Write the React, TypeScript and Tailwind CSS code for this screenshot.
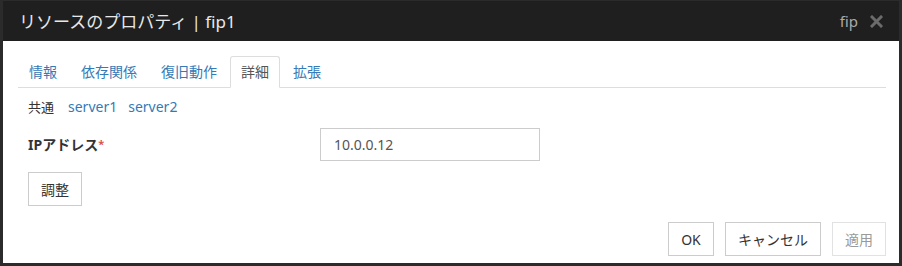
import React from "react";

const TABS = ["情報", "依存関係", "復旧動作", "詳細", "拡張"];
const ACTIVE = "詳細";

const font = { fontFamily: '"Noto Sans", "Noto Sans CJK JP", sans-serif' };

export default function App() {
  return (
    <div
      className="w-[902px] h-[266px] bg-[#2b2b2b] pl-[3px] pr-[3px] pt-[1px] pb-[3px] flex flex-col"
      style={font}
    >
      <div className="h-[40px] bg-[#1f1f1f] flex items-center pl-[16px] pr-[16px] shrink-0">
        <span className="text-[17px] text-[#e8e8e8] leading-none">リソースのプロパティ | fip1</span>
        <span className="ml-auto text-[15px] text-[#aaaaaa] leading-none">fip</span>
        <svg className="ml-[12px]" width="13" height="13" viewBox="0 0 13 13">
          <path d="M2 2 L11 11 M11 2 L2 11" stroke="#6b6b6b" strokeWidth="3" strokeLinecap="square" />
        </svg>
      </div>

      <div className="flex-1 bg-white pl-[15px] pr-[13px] pt-[15px] flex flex-col">
        <ul className="flex border-b border-[#dddddd] h-[32px]">
          {TABS.map((t) => (
            <li key={t} className="mr-[2px] -mb-px">
              <span
                className={
                  t === ACTIVE
                    ? "block h-[32px] px-[10px] leading-[30px] text-[14px] text-[#555555] bg-white border border-[#dddddd] border-b-white rounded-t-[3px]"
                    : "block h-[32px] px-[10px] leading-[30px] text-[14px] text-[#337ab7] border border-transparent"
                }
              >
                {t}
              </span>
            </li>
          ))}
        </ul>

        <div className="pl-[10px] flex flex-col">
          <div className="mt-[9px] h-[20px] leading-[20px] flex gap-[11px]">
            <span className="text-[13px] text-[#333333] mr-[3px]">共通</span>
            <span className="text-[14px] text-[#337ab7]">server1</span>
            <span className="text-[14px] text-[#337ab7]">server2</span>
          </div>

          <div className="mt-[11px] flex items-center h-[33px]">
            <span className="w-[292px] text-[14px] font-bold text-[#333333]">
              IPアドレス<sup className="text-[#d9534f] text-[11px] relative -top-[2px]">*</sup>
            </span>
            <div className="w-[220px] h-[33px] border border-[#cccccc] flex items-center pl-[13px] text-[14px] text-[#555555]">
              10.0.0.12
            </div>
          </div>

          <div className="mt-[11px]">
            <button className="h-[34px] w-[54px] border border-[#cccccc] bg-white text-[14px] text-[#333333]">
              調整
            </button>
          </div>
        </div>

        <div className="mt-[16px] flex justify-end gap-[11px]">
          <button className="h-[34px] w-[46px] border border-[#cccccc] bg-white text-[14px] text-[#333333]">
            OK
          </button>
          <button className="h-[34px] px-[12px] border border-[#cccccc] bg-white text-[14px] text-[#333333]">
            キャンセル
          </button>
          <button className="h-[34px] px-[12px] border border-[#e2e2e2] bg-white text-[14px] text-[#9a9a9a]">
            適用
          </button>
        </div>
      </div>
    </div>
  );
}
